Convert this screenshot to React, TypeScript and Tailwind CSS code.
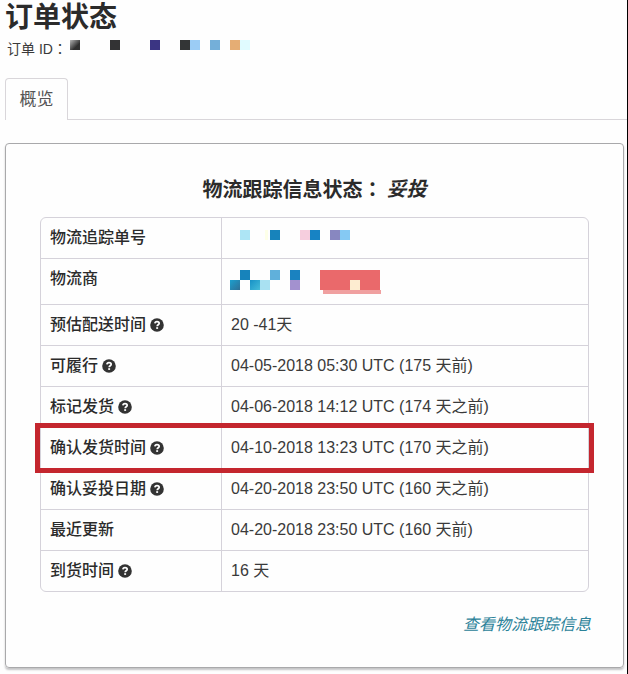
import * as React from 'react'
import clsx from 'clsx'

type Cell = { x: number; y: number; w?: number; h?: number; fill: string }

const orderIdCells: Cell[] = [
  { x: 0, y: 0, fill: 'url(#fade-dark)' },
  { x: 40, y: 0, fill: '#333334' },
  { x: 80, y: 0, fill: '#3b3583' },
  { x: 110, y: 0, fill: '#333536' },
  { x: 120, y: 0, fill: '#9bccf5' },
  { x: 140, y: 0, fill: '#74afd9' },
  { x: 160, y: 0, fill: '#e5ad74' },
  { x: 170, y: 0, fill: '#e0fbff' },
]

const trackingCells: Cell[] = [
  { x: 10, y: 0, fill: '#ade5f5' },
  { x: 35, y: 0, w: 3, fill: '#fdffe8' },
  { x: 40, y: 0, fill: '#1783bb' },
  { x: 70, y: 0, fill: '#f6cede' },
  { x: 80, y: 0, fill: '#1783c4' },
  { x: 100, y: 0, fill: '#8887c0' },
  { x: 110, y: 0, fill: '#85c9f3' },
]

const carrierCells: Cell[] = [
  { x: 10, y: 0, fill: '#1783bb' },
  { x: 40, y: 0, fill: '#60b0db' },
  { x: 60, y: 0, fill: '#1a82c0' },
  { x: 0, y: 10, fill: 'url(#fade-blue)' },
  { x: 20, y: 10, fill: 'url(#fade-cyan)' },
  { x: 30, y: 10, fill: '#a9e1f2' },
  { x: 60, y: 10, fill: '#a391cf' },
  { x: 93, y: 20, w: 58, h: 4, fill: '#f0a0a0' },
  { x: 90, y: 0, w: 60, h: 20, fill: '#ea696b' },
  { x: 120, y: 10, fill: '#fdecd0' },
]

function Mosaic({
  cells,
  label,
  width,
  height,
  className,
}: {
  cells: Cell[]
  label: string
  width: number
  height: number
  className?: string
}) {
  return (
    <svg
      width={width}
      height={height}
      role="img"
      aria-label={label}
      shapeRendering="crispEdges"
      className={clsx('block shrink-0', className)}
    >
      <defs>
        <linearGradient id="fade-dark" x1="0" y1="0" x2="1" y2="1">
          <stop offset="0" stopColor="#b5b5b5" />
          <stop offset="0.65" stopColor="#303030" />
        </linearGradient>
        <linearGradient id="fade-blue" x1="0" y1="0" x2="1" y2="1">
          <stop offset="0" stopColor="#1c9fce" />
          <stop offset="1" stopColor="#2f6f96" />
        </linearGradient>
        <linearGradient id="fade-cyan" x1="0" y1="0" x2="1" y2="1">
          <stop offset="0" stopColor="#1791c6" />
          <stop offset="1" stopColor="#45bcd9" />
        </linearGradient>
      </defs>
      {cells.map((c) => (
        <rect key={`${c.x}-${c.y}`} x={c.x} y={c.y} width={c.w ?? 10} height={c.h ?? 10} fill={c.fill} />
      ))}
    </svg>
  )
}

function HelpIcon() {
  return (
    <svg width="14" height="14" viewBox="0 0 14 14" aria-hidden="true" className="shrink-0">
      <circle cx="7" cy="7" r="6.8" fill="#333" />
      <path
        d="M4.9 5.4C5 4.2 5.8 3.6 7 3.6c1.3 0 2.2.7 2.2 1.7 0 1.5-2 1.5-2 2.9"
        fill="none"
        stroke="#fff"
        strokeWidth="1.7"
      />
      <rect x="6.2" y="9.2" width="1.9" height="1.7" fill="#fff" />
    </svg>
  )
}

// the TC face centres the full-width colon in its box
function Colon() {
  return <span className="font-['Noto_Sans_CJK_TC',sans-serif]">：</span>
}

type Row = { label: string; value: React.ReactNode; help?: boolean; tall?: boolean; marked?: boolean }

const rows: Row[] = [
  {
    label: '物流追踪单号',
    value: <Mosaic cells={trackingCells} label="物流追踪单号" width={120} height={10} className="mb-1.5" />,
  },
  {
    label: '物流商',
    value: <Mosaic cells={carrierCells} label="物流商" width={151} height={24} />,
    tall: true,
  },
  { label: '预估配送时间', value: '20 -41天', help: true },
  { label: '可履行', value: '04-05-2018 05:30 UTC (175 天前)', help: true },
  { label: '标记发货', value: '04-06-2018 14:12 UTC (174 天之前)', help: true },
  { label: '确认发货时间', value: '04-10-2018 13:23 UTC (170 天之前)', help: true, marked: true },
  { label: '确认妥投日期', value: '04-20-2018 23:50 UTC (160 天之前)', help: true },
  { label: '最近更新', value: '04-20-2018 23:50 UTC (160 天前)' },
  { label: '到货时间', value: '16 天', help: true },
]

function StatusTable() {
  return (
    <table className="w-full table-fixed border-separate border-spacing-0 rounded-md border border-[#d5d2da] text-base leading-5">
      <tbody>
        {rows.map((row, i) => (
          <tr key={row.label} className="relative">
            <th
              scope="row"
              className={clsx(
                'w-[180px] pt-2.5 pl-[9px] text-left align-top font-medium text-[#2b2b2b]',
                i === 0 ? 'h-10' : 'border-t border-[#d5d2da]',
                i > 0 && (row.tall ? 'h-[46px]' : 'h-[41px]')
              )}
            >
              <span className="flex items-center gap-1">
                {row.label}
                {row.help && <HelpIcon />}
              </span>
              {row.marked && (
                <span className="pointer-events-none absolute -inset-x-1.5 -top-1 -bottom-[5px] z-10 border-5 border-[#c4262e]" />
              )}
            </th>
            <td
              className={clsx(
                'border-l border-[#d5d2da]',
                i > 0 && 'border-t',
                typeof row.value === 'string' ? 'pt-2.5 pl-[9px] align-top' : 'pl-2 align-middle'
              )}
            >
              {row.value}
            </td>
          </tr>
        ))}
      </tbody>
    </table>
  )
}

export default function App() {
  return (
    <div className="min-h-screen border-r border-black bg-[#fefefe] pr-[3px] pb-1.5 pl-[5px] font-['Liberation_Sans','Noto_Sans_CJK_SC',sans-serif] text-[#3a3a3a]">
      <header>
        <h1 className="text-[28px] leading-9 font-bold text-[#2b2b2b]">订单状态</h1>
        <div className="flex h-6 items-center pl-0.5 text-sm">
          <span className="w-[63px] whitespace-nowrap">
            订单 ID
            <Colon />
          </span>
          <Mosaic cells={orderIdCells} label="订单 ID" width={180} height={10} className="mb-1.5" />
        </div>
      </header>

      <nav className="mt-[18px] -mr-[3px] border-b border-[#d9d6da]">
        <button
          type="button"
          className="-mb-px block h-[42px] w-[63px] rounded-t border border-b-0 border-[#d9d6da] bg-[#fefefe] text-[17px] text-[#555]"
        >
          概览
        </button>
      </nav>

      <main className="mt-[23px] rounded-sm border border-[#a9a9ab] px-[34px] pt-[31px] pb-[30px] shadow-[0_2px_2px_#c4c4c6]">
        <h2 className="mb-[13px] flex justify-center gap-1 text-xl leading-7 font-bold text-[#2b2b2b]">
          <span>
            物流跟踪信息状态
            <Colon />
          </span>
          <em>妥投</em>
        </h2>
        <StatusTable />
        <div className="mt-[21px] -mr-0.5 text-right">
          <a href="#tracking" className="text-base leading-6 text-[#2b8299] italic">
            查看物流跟踪信息
          </a>
        </div>
      </main>
    </div>
  )
}
